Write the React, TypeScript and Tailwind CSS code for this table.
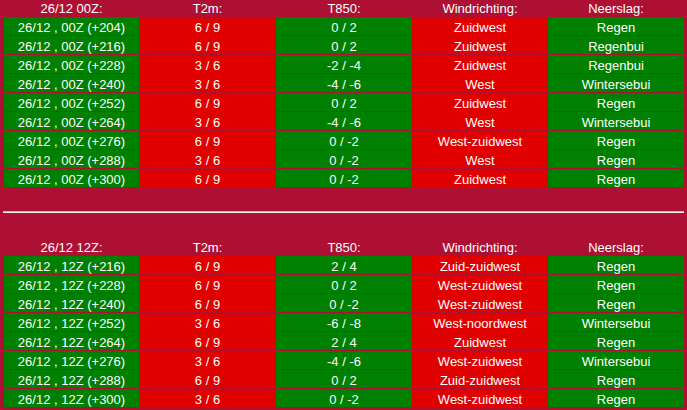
import React from "react";

type Row = [string, string, string, string, string];

const rows1: Row[] = [
  ["26/12 , 00Z (+204)", "6 / 9", "0 / 2", "Zuidwest", "Regen"],
  ["26/12 , 00Z (+216)", "6 / 9", "0 / 2", "Zuidwest", "Regenbui"],
  ["26/12 , 00Z (+228)", "3 / 6", "-2 / -4", "Zuidwest", "Regenbui"],
  ["26/12 , 00Z (+240)", "3 / 6", "-4 / -6", "West", "Wintersebui"],
  ["26/12 , 00Z (+252)", "6 / 9", "0 / 2", "Zuidwest", "Regen"],
  ["26/12 , 00Z (+264)", "3 / 6", "-4 / -6", "West", "Wintersebui"],
  ["26/12 , 00Z (+276)", "6 / 9", "0 / -2", "West-zuidwest", "Regen"],
  ["26/12 , 00Z (+288)", "3 / 6", "0 / -2", "West", "Regen"],
  ["26/12 , 00Z (+300)", "6 / 9", "0 / -2", "Zuidwest", "Regen"],
];

const rows2: Row[] = [
  ["26/12 , 12Z (+216)", "6 / 9", "2 / 4", "Zuid-zuidwest", "Regen"],
  ["26/12 , 12Z (+228)", "6 / 9", "0 / 2", "West-zuidwest", "Regen"],
  ["26/12 , 12Z (+240)", "6 / 9", "0 / -2", "West-zuidwest", "Regen"],
  ["26/12 , 12Z (+252)", "3 / 6", "-6 / -8", "West-noordwest", "Wintersebui"],
  ["26/12 , 12Z (+264)", "6 / 9", "2 / 4", "Zuidwest", "Regen"],
  ["26/12 , 12Z (+276)", "3 / 6", "-4 / -6", "West-zuidwest", "Wintersebui"],
  ["26/12 , 12Z (+288)", "6 / 9", "0 / 2", "Zuid-zuidwest", "Regen"],
  ["26/12 , 12Z (+300)", "3 / 6", "0 / -2", "West-zuidwest", "Regen"],
];

const colBg = ["bg-[#008000]", "bg-[#e00000]", "bg-[#008000]", "bg-[#e00000]", "bg-[#008000]"];

function Header({ title }: { title: string }) {
  const labels = [title, "T2m:", "T850:", "Windrichting:", "Neerslag:"];
  return (
    <div className="grid grid-cols-[135px_137px_136px_136px_136px] h-[17px]">
      {labels.map((l, i) => (
        <div key={i} className="flex items-center justify-center leading-[15px]">
          {l}
        </div>
      ))}
    </div>
  );
}

function Table({ title, rows }: { title: string; rows: Row[] }) {
  return (
    <div className="flex flex-col ml-[4px] w-[680px]">
      <Header title={title} />
      <div className="flex flex-col gap-px">
        {rows.map((r, ri) => (
          <div key={ri} className="grid grid-cols-[135px_137px_136px_136px_136px] h-[18px]">
            {r.map((c, ci) => (
              <div
                key={ci}
                className={`${colBg[ci]} flex items-center justify-center pt-[3px] leading-[15px]`}
              >
                {c}
              </div>
            ))}
          </div>
        ))}
      </div>
    </div>
  );
}

export default function App() {
  return (
    <div className="w-[687px] h-[410px] overflow-hidden bg-[#ad1033] text-white text-[13px] font-['Liberation_Sans',Arial,sans-serif]">
      <Table title="26/12 00Z:" rows={rows1} />
      <div className="mt-[24px] ml-[3px] w-[681px] h-[2px] border-t border-t-[#b8b8b8] border-b border-b-[#f2f2f2]" />
      <div className="mt-[26px]">
        <Table title="26/12 12Z:" rows={rows2} />
      </div>
    </div>
  );
}
